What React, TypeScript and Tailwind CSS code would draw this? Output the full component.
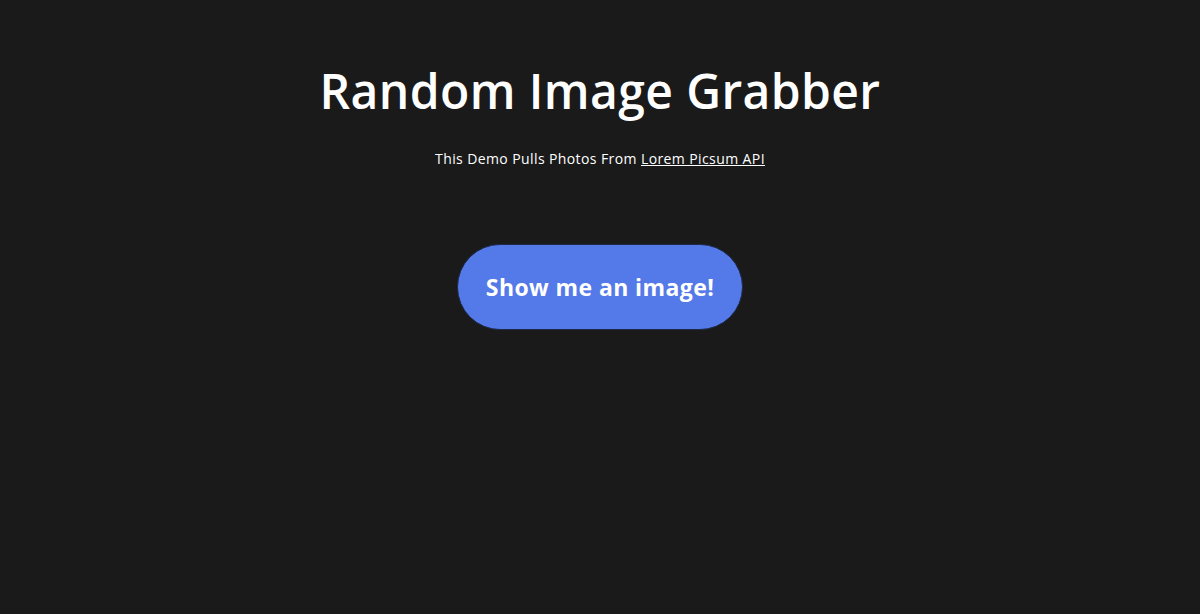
export default function App() {
  return (
    <div className="min-h-screen bg-[#1a1a1a] text-white flex flex-col items-center font-['Open_Sans',sans-serif]">
      <h1 className="mt-[60px] text-[48px] leading-[62px] font-semibold tracking-[0.4px]">Random Image Grabber</h1>
      <p className="mt-[28px] text-[14px] leading-[18px] font-medium tracking-[0.4px]">
        This Demo Pulls Photos From{' '}
        <a href="#" className="underline">
          Lorem Picsum API
        </a>
      </p>
      <button className="mt-[76px] w-[286px] h-[86px] rounded-full bg-[#5479e8] border border-[#1f2a4a] text-[23px] font-bold tracking-[0.4px] text-white">
        Show me an image!
      </button>
    </div>
  );
}
